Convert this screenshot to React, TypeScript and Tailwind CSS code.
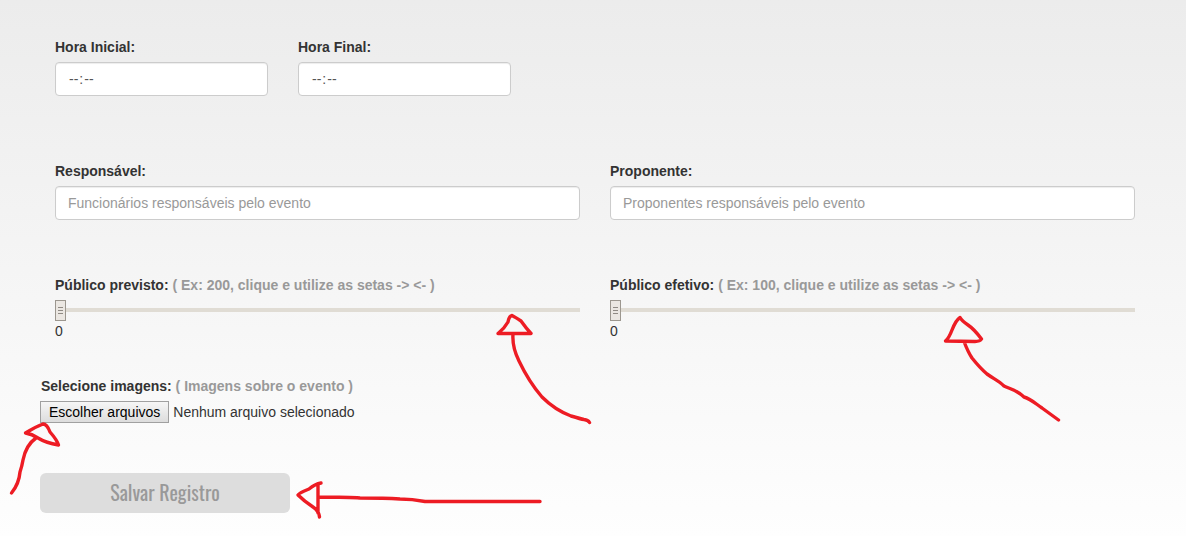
import { useRef, useState } from "react";

const fieldClass =
  "block h-[34px] w-full rounded border border-[#cccccc] bg-white px-3 py-1.5 text-sm leading-5 text-[#555555] shadow-[inset_0_1px_1px_rgba(0,0,0,0.075)] outline-none placeholder:text-[#999999] focus:border-[#66afe9]";

const labelClass = "mb-[5px] block text-sm leading-5 font-bold text-[#333333]";

function TimeField({ id, label }: { id: string; label: string }) {
  return (
    <div className="w-[213px]">
      <label htmlFor={id} className={labelClass}>
        {label}
      </label>
      <input
        id={id}
        type="time"
        className={`${fieldClass} [&::-webkit-calendar-picker-indicator]:hidden [&::-webkit-datetime-edit-ampm-field]:hidden`}
      />
    </div>
  );
}

function TextField({ id, label, placeholder }: { id: string; label: string; placeholder: string }) {
  return (
    <div className="min-w-0">
      <label htmlFor={id} className={labelClass}>
        {label}
      </label>
      <input id={id} type="text" placeholder={placeholder} className={fieldClass} />
    </div>
  );
}

function AudienceSlider({ id, label, hint }: { id: string; label: string; hint: string }) {
  const [value, setValue] = useState(0);
  return (
    <div className="min-w-0">
      <label htmlFor={id} className={labelClass}>
        {label} <span className="text-[#999999]">{hint}</span>
      </label>
      <input
        id={id}
        type="range"
        min={0}
        max={1000}
        value={value}
        onChange={(e) => setValue(Number(e.target.value))}
        className="mb-px block h-5 w-full cursor-pointer appearance-none bg-transparent outline-none [&::-webkit-slider-runnable-track]:h-1 [&::-webkit-slider-runnable-track]:bg-[#e0dcd4] [&::-webkit-slider-thumb]:-mt-2 [&::-webkit-slider-thumb]:h-[21px] [&::-webkit-slider-thumb]:w-[11px] [&::-webkit-slider-thumb]:appearance-none [&::-webkit-slider-thumb]:border [&::-webkit-slider-thumb]:border-[#9c978f] [&::-webkit-slider-thumb]:bg-[#ebe7e2] [&::-webkit-slider-thumb]:bg-[repeating-linear-gradient(to_bottom,#8f8a84_0px,#8f8a84_1px,transparent_1px,transparent_3px)] [&::-webkit-slider-thumb]:bg-[length:5px_7px] [&::-webkit-slider-thumb]:bg-center [&::-webkit-slider-thumb]:bg-no-repeat"
      />
      <output htmlFor={id} className="block text-sm leading-5">
        {value}
      </output>
    </div>
  );
}

function ImagePicker() {
  const inputRef = useRef<HTMLInputElement>(null);
  const [count, setCount] = useState(0);
  return (
    <div>
      <label htmlFor="imagens" className={`${labelClass} pl-px`}>
        Selecione imagens: <span className="text-[#999999]">( Imagens sobre o evento )</span>
      </label>
      <input
        ref={inputRef}
        id="imagens"
        type="file"
        accept="image/*"
        multiple
        hidden
        onChange={(e) => setCount(e.target.files?.length ?? 0)}
      />
      <div className="flex items-center gap-1 text-sm leading-5">
        <button
          type="button"
          onClick={() => inputRef.current?.click()}
          className="h-[22px] border border-[#a0a0a0] bg-linear-to-b from-[#f6f6f6] to-[#dddddd] px-2 text-black"
        >
          Escolher arquivos
        </button>
        <span>{count === 0 ? "Nenhum arquivo selecionado" : `${count} arquivos`}</span>
      </div>
    </div>
  );
}

function Arrows() {
  return (
    <svg
      aria-hidden="true"
      width="1186"
      height="536"
      viewBox="0 0 1186 536"
      className="pointer-events-none absolute top-0 left-0 max-w-none"
      fill="none"
      stroke="#ed1c24"
      strokeWidth="3.4"
      strokeLinecap="round"
      strokeLinejoin="round"
    >
      <path d="M498 333.500Q504 329 508 322Q509 316 512 315.500Q515 317 521 321Q526 328 531 333.500ZM513 334Q512 347 519 361Q529 382 542 397Q555 410 571 416Q581 419 584 419.500Q588 420 589.500 422.500" />
      <path d="M945.500 341Q949 338 952 330Q956 320 960 317.500Q962 321 968 325Q974 329 981.500 339Q980 341.500 975 341.500ZM964 341.500Q968 352 972 358Q980 368 987 374C994 379 999 381 1004 386C1010 389 1017 390 1024 397C1031 399 1036 404 1042 408L1058.500 420" />
      <path d="M11.500 493Q19 484 20 472Q22 466 23 460Q26 445 36 438M25.500 433Q35 427 43 424Q47 424 50 432Q57 440 58.500 445Q46 443 38 438Q32 434 25.500 433Z" />
      <path d="M540 501.500H425Q412 499 400 499Q385 498 360 498Q350 497 318 497M321 483Q315 484 309 489Q299 493 298 495Q304 501 313 507Q319 511 319.500 517M318 484V513" />
    </svg>
  );
}

export default function App() {
  return (
    <main className="relative min-h-screen overflow-hidden bg-linear-to-b from-[#ececec] to-[#fefefe] pt-[37px] pr-9 pb-6 pl-10 font-['Liberation_Sans',Arial,sans-serif] text-sm leading-5 text-[#333333]">
      <form onSubmit={(e) => e.preventDefault()}>
        <div className="flex flex-wrap gap-[30px] px-[15px]">
          <TimeField id="hora-inicial" label="Hora Inicial:" />
          <TimeField id="hora-final" label="Hora Final:" />
        </div>

        <div className="mt-[65px] grid grid-cols-2 gap-[30px] px-[15px]">
          <TextField id="responsavel" label="Responsável:" placeholder="Funcionários responsáveis pelo evento" />
          <TextField id="proponente" label="Proponente:" placeholder="Proponentes responsáveis pelo evento" />
        </div>

        <div className="mt-[55px] grid grid-cols-2 gap-[30px] px-[15px]">
          <AudienceSlider
            id="publico-previsto"
            label="Público previsto:"
            hint="( Ex: 200, clique e utilize as setas -> <- )"
          />
          <AudienceSlider
            id="publico-efetivo"
            label="Público efetivo:"
            hint="( Ex: 100, clique e utilize as setas -> <- )"
          />
        </div>

        <div className="mt-[35px]">
          <ImagePicker />
        </div>

        <button
          type="submit"
          className="mt-[50px] block h-10 w-[250px] rounded-md bg-[#dddddd] pb-0.5 font-['Oswald','Liberation_Sans_Narrow',sans-serif] text-xl text-[#999999]"
        >
          Salvar Registro
        </button>
      </form>
      <Arrows />
    </main>
  );
}
